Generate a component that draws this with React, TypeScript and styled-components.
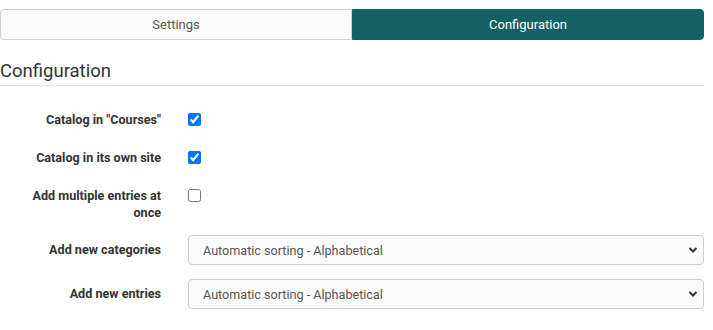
import React from 'react'
import styled, { createGlobalStyle } from 'styled-components'

const GlobalStyle = createGlobalStyle`
  body {
    margin: 0;
    background: #fff;
    font-family: Roboto, "Liberation Sans", Arial, sans-serif;
    color: #333;
  }
`

const Page = styled.div`
  width: 704px;
  padding-top: 9px;
`

const TabBar = styled.div`
  display: flex;
  height: 31px;
`

const Tab = styled.div<{ $active?: boolean }>`
  flex: 1;
  display: flex;
  align-items: center;
  justify-content: center;
  font-size: 13px;
  box-sizing: border-box;
  border: 1px solid ${(p) => (p.$active ? '#136163' : '#cfcfcf')};
  background: ${(p) => (p.$active ? '#136163' : '#fcfcfc')};
  color: ${(p) => (p.$active ? '#fff' : '#555')};
  border-radius: ${(p) => (p.$active ? '0 4px 4px 0' : '4px 0 0 4px')};
`

const Heading = styled.h2`
  margin: 20px 0 0;
  padding-bottom: 3px;
  font-size: 18.5px;
  line-height: 22px;
  font-weight: 400;
  color: #333;
  border-bottom: 1px solid #e5e5e5;
`

const Form = styled.div`
  margin-top: 19px;
`

const Row = styled.div<{ $tight?: boolean }>`
  display: flex;
  align-items: flex-start;
  margin-bottom: ${(p) => (p.$tight ? '14px' : '15px')};
`

const Label = styled.label`
  width: 176px;
  flex-shrink: 0;
  box-sizing: border-box;
  padding: 6px 15px 0 20px;
  text-align: right;
  font-size: 12.6px;
  line-height: 17px;
  font-weight: 700;
  color: #333;
`

const Control = styled.div<{ $check?: boolean }>`
  flex: 1;
  padding-left: 12px;
  padding-top: ${(p) => (p.$check ? '8px' : '0')};
  display: flex;
`

const Checkbox = styled.input.attrs({ type: 'checkbox' })`
  width: 13px;
  height: 13px;
  margin: 0;
`

const SelectWrap = styled.div`
  position: relative;
  flex: 1;
`

const Select = styled.select`
  appearance: none;
  width: 100%;
  height: 30px;
  box-sizing: border-box;
  border: 1px solid #ccc;
  border-radius: 4px;
  background: #fcfcfc;
  padding: 0 30px 0 14px;
  font-family: Roboto, "Liberation Sans", Arial, sans-serif;
  font-size: 12.6px;
  color: #555;
`

const Chevron = styled.svg`
  position: absolute;
  right: 6px;
  top: 11px;
  pointer-events: none;
`

const SortSelect = () => (
  <SelectWrap>
    <Select defaultValue="alpha">
      <option value="alpha">Automatic sorting - Alphabetical</option>
      <option value="manual">Manual sorting</option>
    </Select>
    <Chevron width="10" height="8" viewBox="0 0 10 8">
      <path d="M1.5 2 L5 5.5 L8.5 2" fill="none" stroke="#333" strokeWidth="2" />
    </Chevron>
  </SelectWrap>
)

const App = () => (
  <>
    <GlobalStyle />
    <Page>
      <TabBar>
        <Tab>Settings</Tab>
        <Tab $active>Configuration</Tab>
      </TabBar>
      <Heading>Configuration</Heading>
      <Form>
        <Row>
          <Label>Catalog in "Courses"</Label>
          <Control $check>
            <Checkbox defaultChecked />
          </Control>
        </Row>
        <Row>
          <Label>Catalog in its own site</Label>
          <Control $check>
            <Checkbox defaultChecked />
          </Control>
        </Row>
        <Row $tight>
          <Label>Add multiple entries at once</Label>
          <Control $check>
            <Checkbox />
          </Control>
        </Row>
        <Row $tight>
          <Label>Add new categories</Label>
          <Control>
            <SortSelect />
          </Control>
        </Row>
        <Row>
          <Label>Add new entries</Label>
          <Control>
            <SortSelect />
          </Control>
        </Row>
      </Form>
    </Page>
  </>
)

export default App
